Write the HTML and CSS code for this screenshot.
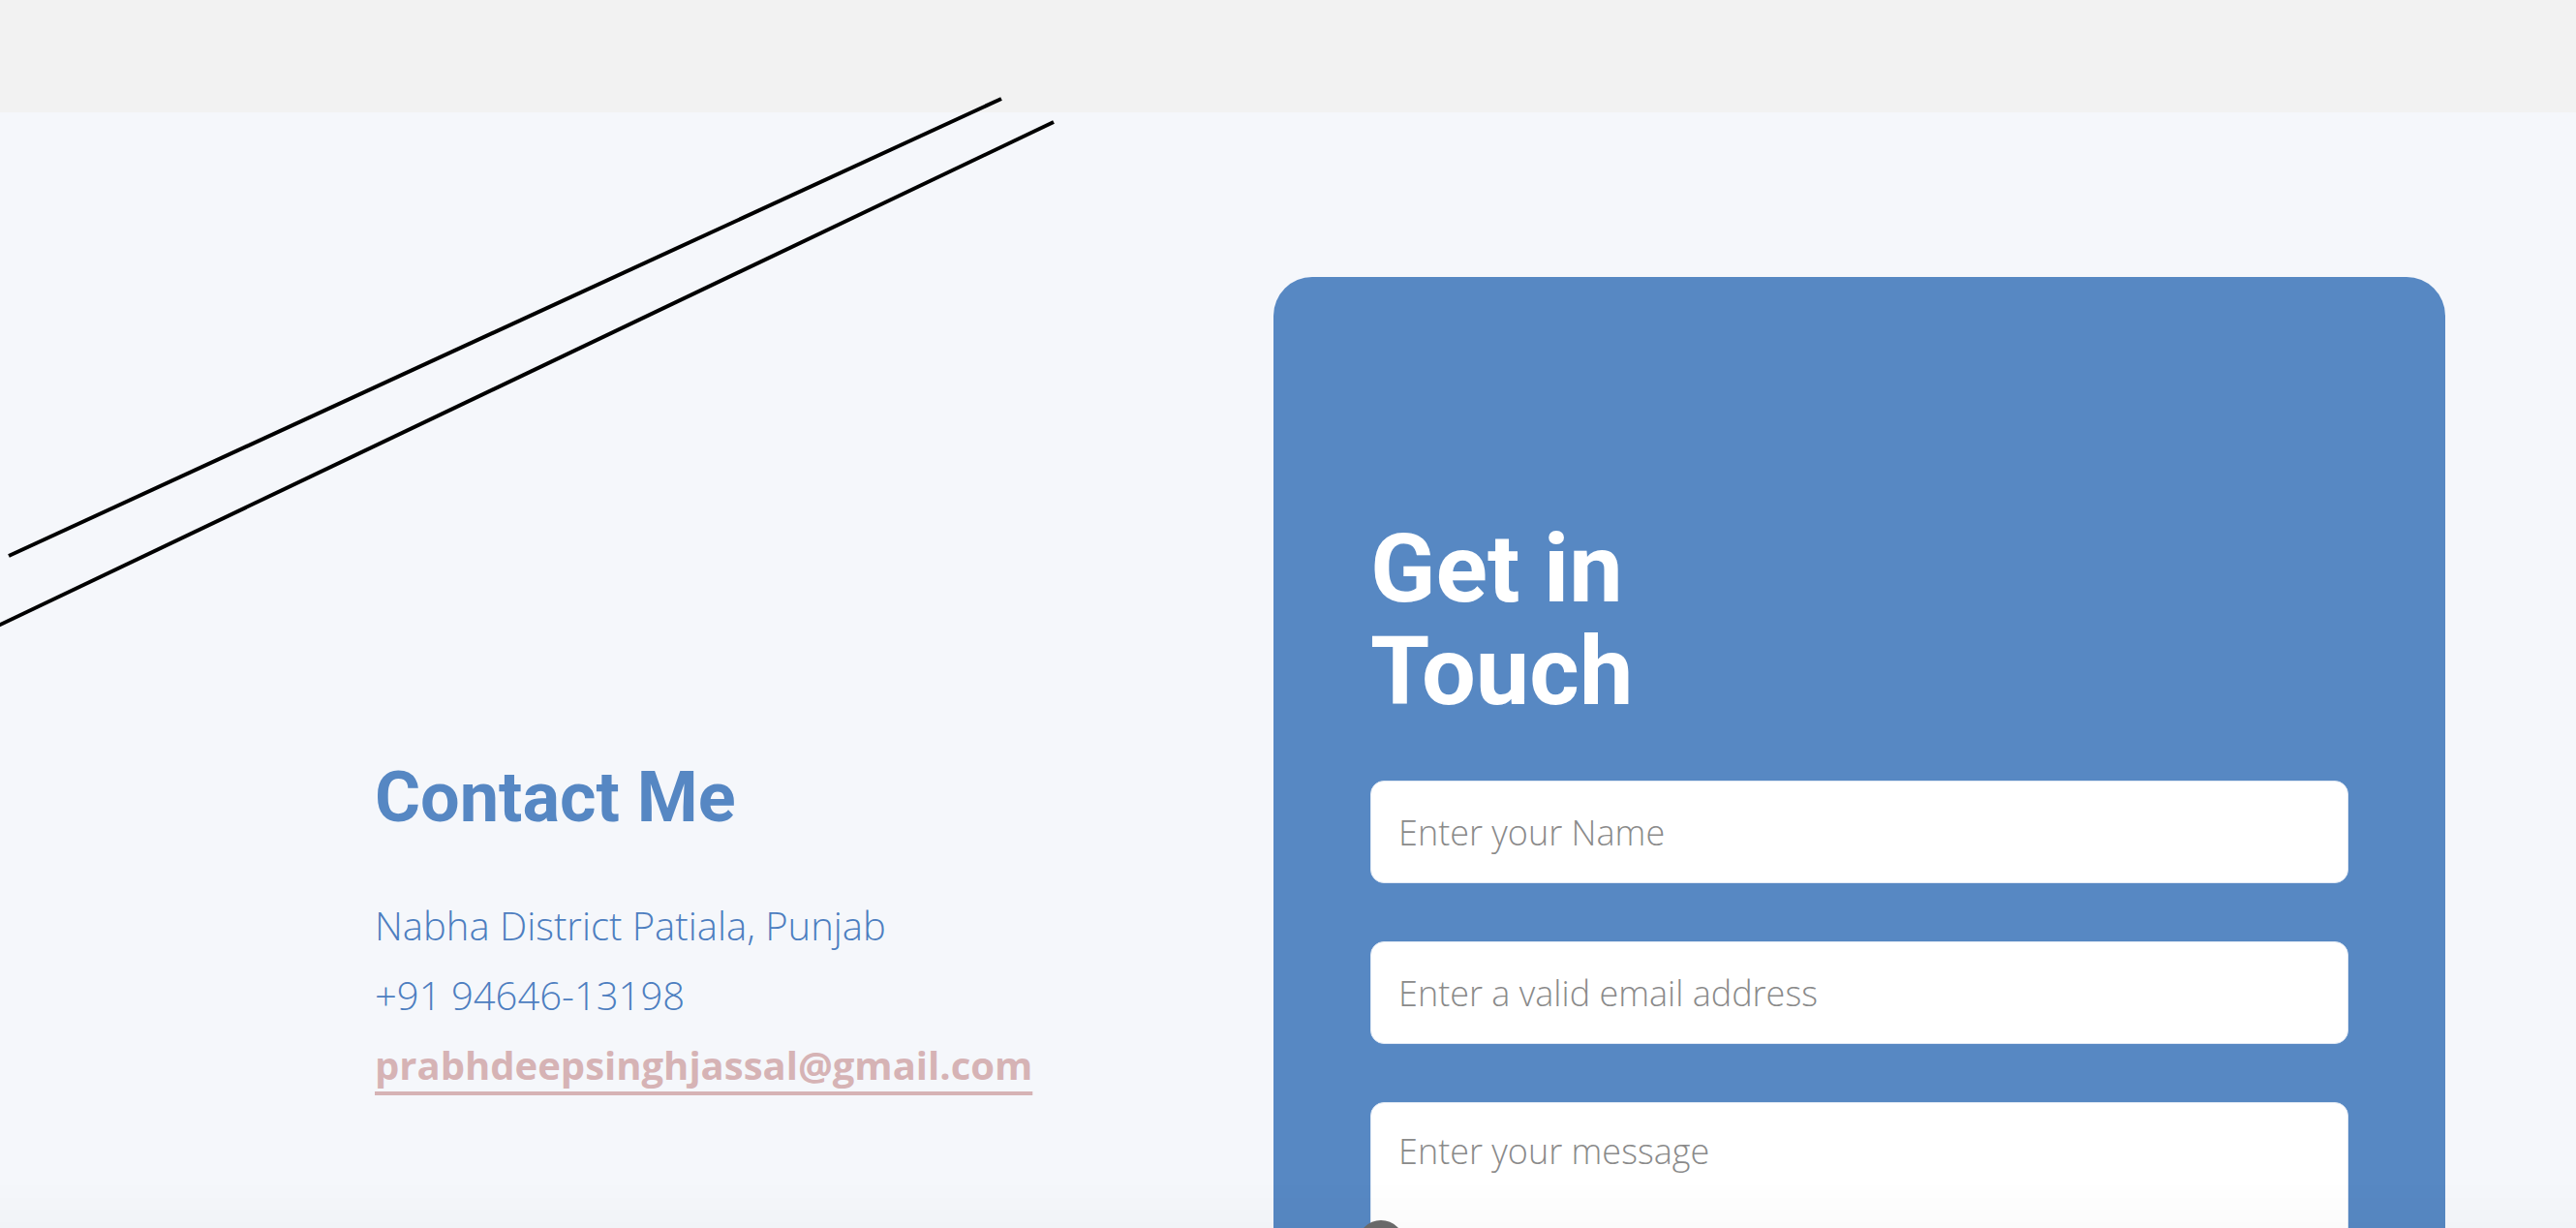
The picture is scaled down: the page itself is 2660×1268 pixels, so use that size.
FILE: index.html
```html
<!DOCTYPE html>
<html lang="en">
<head>
<meta charset="utf-8">
<title>Contact</title>
<link rel="stylesheet" href="styles.css">
</head>
<body>
<header class="topbar"></header>
<svg class="deco-lines" width="1100" height="660" viewBox="0 0 1100 660" aria-hidden="true">
  <line x1="9" y1="574" x2="1034" y2="102" stroke="#000" stroke-width="4"/>
  <line x1="-4" y1="647" x2="1088" y2="126" stroke="#000" stroke-width="4"/>
</svg>
<main class="contact">
  <section class="info">
    <h2 class="info-title">Contact Me</h2>
    <p class="info-line">Nabha District Patiala, Punjab</p>
    <p class="info-line">+91 94646-13198</p>
    <p class="info-line"><a class="info-mail" href="#">prabhdeepsinghjassal@gmail.com</a></p>
  </section>
  <section class="card">
    <h2 class="card-title">Get in Touch</h2>
    <form class="form">
      <input class="field" type="text" placeholder="Enter your Name">
      <input class="field" type="email" placeholder="Enter a valid email address">
      <textarea class="field area" placeholder="Enter your message"></textarea>
    </form>
    <span class="dot"></span>
  </section>
</main>
<div class="bottom-fade"></div>
</body>
</html>
```

FILE: styles.css
```css
* { box-sizing: border-box; }
html, body { margin: 0; padding: 0; }
body {
  background: #f5f7fb;
  font-family: "Open Sans", "Liberation Sans", sans-serif;
  height: 1268px;
  overflow: hidden;
  position: relative;
}
.topbar {
  height: 116px;
  background: #f2f2f2;
}
.deco-lines {
  position: absolute;
  left: 0;
  top: 0;
  z-index: 2;
}
.contact {
  display: flex;
  align-items: flex-start;
  padding: 170px 135px 0 387px;
}
.info {
  flex: 1;
  padding-top: 495px;
}
.info-title {
  margin: 0 0 53px;
  font-family: Roboto, "Liberation Sans", sans-serif;
  font-weight: 700;
  font-size: 72px;
  line-height: 86.4px;
  color: #5687c3;
}
.info-line {
  margin: 0;
  font-size: 40px;
  font-weight: 300;
  line-height: 72px;
  color: #4d7ec0;
}
.info-mail {
  color: #d6b3b5;
  font-weight: 700;
  text-decoration: underline;
  text-decoration-thickness: 4px;
  text-underline-offset: 12px;
  text-decoration-skip-ink: none;
}
.card {
  position: relative;
  width: 1210px;
  background: #5788c3;
  border-radius: 40px;
  padding: 248px 100px 120px;
}
.card-title {
  margin: 0;
  max-width: 400px;
  font-family: Roboto, "Liberation Sans", sans-serif;
  font-weight: 700;
  font-size: 99px;
  line-height: 106px;
  color: #ffffff;
}
.form {
  display: flex;
  flex-direction: column;
  gap: 60px;
  margin-top: 60px;
}
.field {
  display: block;
  width: 100%;
  height: 106px;
  border: 1px solid #dfe8f4;
  border-radius: 14px;
  background: #ffffff;
  padding: 0 28px;
  font-family: "Open Sans", "Liberation Sans", sans-serif;
  font-weight: 300;
  font-size: 36px;
  color: #333;
  outline: none;
}
.field::placeholder { color: #8a8a8a; opacity: 1; }
.area {
  height: 320px;
  padding: 25px 28px;
  resize: none;
}
.dot {
  position: absolute;
  left: 87px;
  top: 974px;
  width: 48px;
  height: 48px;
  border-radius: 50%;
  background: #6b6b6b;
}
.bottom-fade {
  position: fixed;
  left: 0;
  right: 0;
  bottom: 0;
  height: 50px;
  background: linear-gradient(to bottom, rgba(0,0,0,0), rgba(0,0,0,0.015));
  pointer-events: none;
  z-index: 3;
}
```
